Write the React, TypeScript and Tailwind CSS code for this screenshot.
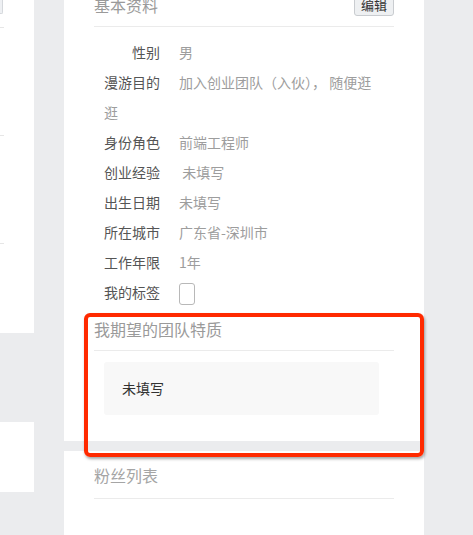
import React from "react"

const rows: { label: string; value: React.ReactNode }[] = [
  { label: "性别", value: "男" },
  { label: "漫游目的", value: "加入创业团队（入伙）， 随便逛逛" },
  { label: "身份角色", value: "前端工程师" },
  { label: "创业经验", value: " 未填写" },
  { label: "出生日期", value: "未填写" },
  { label: "所在城市", value: "广东省-深圳市" },
  { label: "工作年限", value: "1年" },
  {
    label: "我的标签",
    value: <span className="inline-block w-[16px] h-[22px] border border-[#b8b8b8] rounded-[3px] align-middle"></span>,
  },
]

export default function App() {
  return (
    <div
      className="relative flex w-[473px] h-[535px] overflow-hidden bg-[#ebecee]"
      style={{ fontFamily: '"Noto Sans CJK SC", "Noto Sans", sans-serif' }}
    >
      {/* left column cards */}
      <div className="w-[34px] flex flex-col shrink-0">
        <div className="h-[333px] bg-white relative">
          <div className="w-[3px] h-[14px] bg-[#eef0f3] border-r border-b border-[#d5d8dc] rounded-br-[2px]"></div>
          <div className="mt-[13px] w-[4px] border-t border-[#e6e6e6]"></div>
          <div className="mt-[107px] w-[4px] border-t border-[#e6e6e6]"></div>
          <div className="mt-[107px] w-[4px] border-t border-[#e6e6e6]"></div>
        </div>
        <div className="h-[89px]"></div>
        <div className="h-[70px] bg-white"></div>
      </div>

      <div className="w-[30px] shrink-0"></div>

      {/* main panel */}
      <div className="w-[360px] shrink-0 flex flex-col">
        <div className="bg-white px-[30px] pb-[26px]">
          <div className="-mt-[16px] h-[43px] flex items-center justify-between border-b border-[#ebebeb]">
            <span className="text-[16px] text-[#9a9a9a]">基本资料</span>
            <button className="h-[22px] px-[6px] text-[13px] leading-[20px] text-[#333] bg-[#eef0f2] border border-[#c9ccd0] rounded-[3px]">
              编辑
            </button>
          </div>

          <div className="pt-[10px] pl-[10px] pr-[18px] text-[14px] leading-[30px]">
            {rows.map((r) => (
              <div key={r.label}>
                <span className="inline-block w-[56px] text-right text-[#555] mr-[19px]">{r.label}</span>
                <span className="text-[#9d9d9d] whitespace-pre-wrap">{r.value}</span>
              </div>
            ))}
          </div>

          <div className="h-[44px] flex items-center border-b border-[#ebebeb]">
            <span className="text-[16px] text-[#9a9a9a]">我期望的团队特质</span>
          </div>

          <div className="mt-[11px] ml-[10px] w-[275px] h-[53px] bg-[#f8f8f8] rounded-[3px] flex items-center pl-[18px] text-[14px] text-[#333]">
            未填写
          </div>
        </div>

        <div className="h-[10px]"></div>

        <div className="flex-1 bg-white px-[30px]">
          <div className="h-[48px] flex items-center border-b border-[#ebebeb]">
            <span className="text-[16px] text-[#a5a5a5]">粉丝列表</span>
          </div>
        </div>
      </div>

      {/* highlight annotation */}
      <div className="absolute left-[84px] top-[313px] w-[340px] h-[144px] border-[4px] border-[#ff2a00] rounded-[6px] shadow-[1px_2px_3px_rgba(0,0,0,0.35)]"></div>
    </div>
  )
}
